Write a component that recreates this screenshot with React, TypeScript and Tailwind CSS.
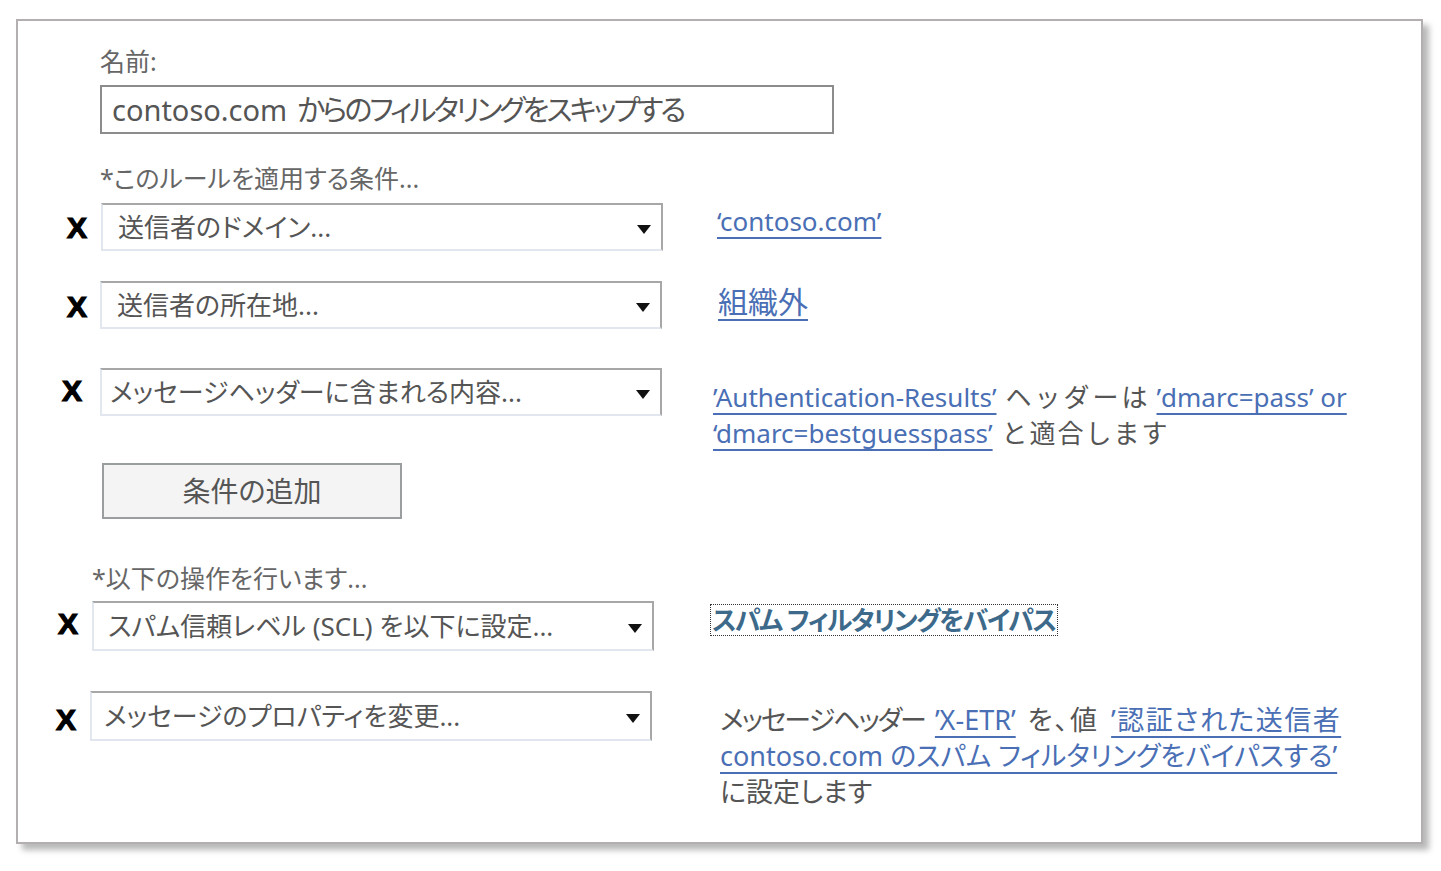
import React from "react";

const jp = "font-['Noto_Sans','Noto_Sans_CJK_JP',sans-serif] [font-feature-settings:'palt']";
const link = "text-[#4a6fb5] underline decoration-[1.5px] underline-offset-[6px]";

function Arrow() {
  return (
    <svg width="14" height="9" viewBox="0 0 14 9" className="shrink-0">
      <path d="M0 0h14L7 9z" fill="#111" />
    </svg>
  );
}

function Select({ text, className }: { text: string; className: string }) {
  return (
    <div
      className={`flex items-center justify-between border-2 border-t-[#a7a7a7] border-r-[#a7a7a7] border-b-[#e2e7ef] border-l-[#e2e7ef] bg-white pr-[10px] ${className}`}
    >
      <span className="whitespace-nowrap text-[26px] leading-[36px] text-[#555]">{text}</span>
      <div className="pt-[4px]">
        <Arrow />
      </div>
    </div>
  );
}

function Remove({ className }: { className: string }) {
  return (
    <span
      className={`font-['Liberation_Sans',sans-serif] text-[30px] font-bold leading-none text-black [-webkit-text-stroke:1.2px_black] ${className}`}
    >
      X
    </span>
  );
}

export default function App() {
  return (
    <div className={`min-h-screen w-full bg-white ${jp}`}>
      <div className="ml-[16px] pt-[19px]">
        <div className="h-[825px] w-[1407px] border-2 border-[#b3aeb0] bg-white shadow-[6px_6px_6px_rgba(0,0,0,0.28)]">
          {/* 名前 */}
          <div className="ml-[82px] mt-[21px] h-[38px] text-[25px] leading-[38px] text-[#666]">名前:</div>
          <div className="ml-[82px] mt-[5px] flex h-[49px] w-[734px] items-center border-2 border-[#8c8c8c] px-[10px] text-[29px] text-[#555]">
            <span>contoso.com</span>
            <span className="ml-[10px] tracking-[-3px]">からのフィルタリングをスキップする</span>
          </div>

          {/* 条件 */}
          <div className="ml-[82px] mt-[26px] h-[36px] text-[25px] leading-[36px] text-[#666]">*このルールを適用する条件...</div>

          <div className="mt-[7px] flex h-[48px] items-center">
            <Remove className="ml-[49px] mt-[2px] w-[34px]" />
            <Select text="送信者のドメイン..." className="h-[48px] w-[562px] pl-[15px]" />
            <a className={`ml-[54px] -mt-[12px] text-[26px] leading-[36px] ${link}`}>‘contoso.com’</a>
          </div>

          <div className="mt-[30px] flex h-[48px] items-center">
            <Remove className="ml-[49px] mt-[4px] w-[33px]" />
            <Select text="送信者の所在地..." className="h-[48px] w-[562px] pl-[15px]" />
            <a className={`ml-[56px] -mt-[6px] text-[30px] leading-[40px] ${link}`}>組織外</a>
          </div>

          <div className="mt-[39px] flex h-[48px] items-start">
            <Remove className="ml-[44px] mt-[8px] w-[38px]" />
            <Select text="メッセージヘッダーに含まれる内容..." className="h-[48px] w-[562px] pl-[8px]" />
            <div className="ml-[51px] mt-[11px] whitespace-nowrap text-[26px] leading-[36px] text-[#555] [font-feature-settings:normal]">
              <div>
                <a className={link}>’Authentication-Results’</a>
                <span className="ml-[9px] tracking-[3px]">ヘッダーは</span>
                <a className={`ml-[6px] ${link}`}>’dmarc=pass’ or</a>
              </div>
              <div>
                <a className={link}>‘dmarc=bestguesspass’</a>
                <span className="ml-[9px] tracking-[2px]">と適合します</span>
              </div>
            </div>
          </div>

          <button className="ml-[84px] mt-[47px] flex h-[56px] w-[300px] items-center justify-center border-2 border-[#9a9e9e] bg-[#f4f4f4] text-[28px] text-[#555]">
            条件の追加
          </button>

          {/* 操作 */}
          <div className="ml-[74px] mt-[42px] h-[34px] text-[25px] leading-[34px] text-[#666]">*以下の操作を行います...</div>

          <div className="mt-[6px] flex h-[50px] items-center">
            <Remove className="ml-[40px] mt-[-4px] w-[34px]" />
            <Select text="スパム信頼レベル (SCL) を以下に設定..." className="h-[50px] w-[562px] pl-[14px]" />
            <a className="ml-[56px] -mt-[12px] whitespace-nowrap border border-dotted border-[#333] px-[1px] text-[26px] font-bold leading-[30px] tracking-[-1.5px] text-[#3d6a8a]">
              スパム フィルタリングをバイパス
            </a>
          </div>

          <div className="mt-[40px] flex items-start">
            <Remove className="ml-[38px] mt-[14px] w-[34px]" />
            <Select text="メッセージのプロパティを変更..." className="h-[50px] w-[562px] pl-[12px]" />
            <div className="ml-[68px] mt-[11px] whitespace-nowrap text-[27px] leading-[36px] text-[#555]">
              <div>
                <span className="tracking-[-2px]">メッセージヘッダー</span>
                <a className={`ml-[10px] ${link}`}>’X-ETR’</a>
                <span className="ml-[12px] tracking-[2px]">を、値</span>
                <a className={`ml-[12px] tracking-[1.5px] ${link}`}>’認証された送信者</a>
              </div>
              <div>
                <a className={link}>contoso.com のスパム フィルタリングをバイパスする’</a>
              </div>
              <div className="mt-[3px] leading-[30px]">に設定します</div>
            </div>
          </div>
        </div>
      </div>
    </div>
  );
}
